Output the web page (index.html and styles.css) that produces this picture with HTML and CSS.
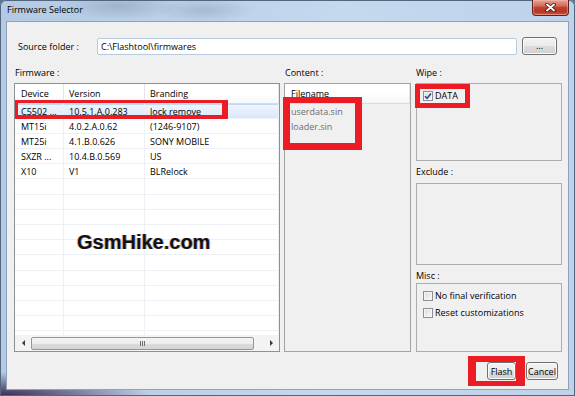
FILE: index.html
```html
<!DOCTYPE html>
<html lang="en">
<head>
    <meta charset="UTF-8">
    <title>Firmware Selector</title>
    <link rel="stylesheet" href="styles.css">
</head>
<body>
    <div class="window">
        <div class="titlebar">
            <span class="title">Firmware Selector</span>
            <div class="close-button">
                <svg width="11" height="9" viewBox="0 0 11 9">
                    <path d="M2 1.5 L9 7.5 M9 1.5 L2 7.5" stroke="#3a1410" stroke-width="3.6" stroke-linecap="round"/>
                    <path d="M2 1.5 L9 7.5 M9 1.5 L2 7.5" stroke="#fff" stroke-width="1.9" stroke-linecap="round"/>
                </svg>
            </div>
        </div>
        <div class="client">
            <div class="source-row">
                <span class="source-label">Source folder :</span>
                <div class="textbox">C:\Flashtool\firmwares</div>
                <button class="btn browse-button">...</button>
            </div>
            <div class="panels">
                <div class="col col-firmware">
                    <div class="group-label">Firmware :</div>
                    <div class="list-box firmware-list">
                        <div class="rows">
                            <div class="row head">
                                <div class="cell">Device</div>
                                <div class="cell">Version</div>
                                <div class="cell">Branding</div>
                            </div>
                            <div class="row selected">
                                <div class="cell">C5502 ...</div>
                                <div class="cell">10.5.1.A.0.283</div>
                                <div class="cell">lock remove</div>
                            </div>
                            <div class="row">
                                <div class="cell">MT15i</div>
                                <div class="cell">4.0.2.A.0.62</div>
                                <div class="cell">(1246-9107)</div>
                            </div>
                            <div class="row">
                                <div class="cell">MT25i</div>
                                <div class="cell">4.1.B.0.626</div>
                                <div class="cell">SONY MOBILE</div>
                            </div>
                            <div class="row">
                                <div class="cell">SXZR ...</div>
                                <div class="cell">10.4.B.0.569</div>
                                <div class="cell">US</div>
                            </div>
                            <div class="row">
                                <div class="cell">X10</div>
                                <div class="cell">V1</div>
                                <div class="cell">BLRelock</div>
                            </div>
                            <div class="row"><div class="cell"></div><div class="cell"></div><div class="cell"></div></div>
                            <div class="row"><div class="cell"></div><div class="cell"></div><div class="cell"></div></div>
                            <div class="row"><div class="cell"></div><div class="cell"></div><div class="cell"></div></div>
                            <div class="row"><div class="cell"></div><div class="cell"></div><div class="cell"></div></div>
                            <div class="row"><div class="cell"></div><div class="cell"></div><div class="cell"></div></div>
                            <div class="row"><div class="cell"></div><div class="cell"></div><div class="cell"></div></div>
                            <div class="row"><div class="cell"></div><div class="cell"></div><div class="cell"></div></div>
                            <div class="row"><div class="cell"></div><div class="cell"></div><div class="cell"></div></div>
                            <div class="row"><div class="cell"></div><div class="cell"></div><div class="cell"></div></div>
                            <div class="row"><div class="cell"></div><div class="cell"></div><div class="cell"></div></div>
                            <div class="row"><div class="cell"></div><div class="cell"></div><div class="cell"></div></div>
                        </div>
                        <div class="hscroll">
                            <div class="arrow arrow-left"></div>
                            <div class="thumb"><div class="grip"></div></div>
                            <div class="track"></div>
                            <div class="arrow arrow-right"></div>
                        </div>
                    </div>
                </div>
                <div class="col col-content">
                    <div class="group-label">Content :</div>
                    <div class="list-box content-list">
                        <div class="content-head">Filename</div>
                        <div class="content-item">userdata.sin</div>
                        <div class="content-item">loader.sin</div>
                    </div>
                </div>
                <div class="col col-options">
                    <div class="group-label">Wipe :</div>
                    <div class="group-box wipe-box">
                        <div class="check">
                            <span class="checkbox checked">
                                <svg width="8" height="8" viewBox="0 0 8 8">
                                    <path d="M1 4.2 L3.1 6.4 L7 1.4" fill="none" stroke="#2b4488" stroke-width="1.6"/>
                                </svg>
                            </span>
                            <span>DATA</span>
                        </div>
                    </div>
                    <div class="group-label exclude-label">Exclude :</div>
                    <div class="group-box exclude-box"></div>
                    <div class="group-label misc-label">Misc :</div>
                    <div class="group-box misc-box">
                        <div class="check">
                            <span class="checkbox"></span>
                            <span>No final verification</span>
                        </div>
                        <div class="check">
                            <span class="checkbox"></span>
                            <span>Reset customizations</span>
                        </div>
                    </div>
                </div>
            </div>
            <div class="actions">
                <button class="btn flash-button">Flash</button>
                <button class="btn cancel-button">Cancel</button>
            </div>
        </div>

        <div class="watermark">GsmHike.com</div>
        <div class="mark mark-row"></div>
        <div class="mark mark-content"></div>
        <div class="mark mark-wipe"></div>
        <div class="mark mark-flash"></div>
    </div>
</body>
</html>
```

FILE: styles.css
```css
* {
    box-sizing: border-box;
}
body {
    margin: 0;
    background-color: #5d7391;
    font-family: "Open Sans", "Noto Sans", sans-serif;
    font-size: 9px;
    color: #000;
    overflow: hidden;
}
.window {
    position: relative;
    width: 575px;
    height: 396px;
    display: flex;
    flex-direction: column;
    padding: 0 6px 6px;
    border-radius: 6px 6px 0 0;
    background:
        radial-gradient(ellipse 150px 24px at 0 100%, rgba(48, 30, 72, 0.95), rgba(48, 30, 72, 0)),
        radial-gradient(ellipse 60px 14px at 120px 6px, rgba(112, 130, 152, 0.35), rgba(112, 130, 152, 0)),
        radial-gradient(ellipse 50px 12px at 205px 10px, rgba(112, 130, 152, 0.3), rgba(112, 130, 152, 0)),
        linear-gradient(to right, #b4cae4, #c4d8ee 60%, #bed3ea);
    box-shadow: inset 0 0 0 1px #53667f;
}
.titlebar {
    display: flex;
    height: 21px;
    flex-shrink: 0;
}
.title {
    padding-left: 1px;
    line-height: 20px;
}
.close-button {
    margin-left: auto;
    width: 37px;
    height: 16px;
    display: flex;
    align-items: center;
    justify-content: center;
    border: 1px solid #5e241c;
    border-top: none;
    border-radius: 0 0 4px 4px;
    background: linear-gradient(#e6a496 0%, #d46a5a 40%, #c2402f 50%, #b83424 80%, #cf6650 100%);
    box-shadow: inset 0 0 0 1px rgba(255, 190, 180, 0.45);
}
.client {
    flex: 1;
    display: flex;
    flex-direction: column;
    background-color: #f0f0f0;
    border: 1px solid #8fa2ba;
}

/* source folder */
.source-row {
    display: flex;
    align-items: center;
    height: 18px;
    margin-top: 15px;
    padding-left: 11px;
}
.source-label {
    width: 79px;
}
.textbox {
    width: 420px;
    height: 17px;
    padding-left: 3px;
    line-height: 15px;
    background-color: #fff;
    border: 1px solid #b7cbe0;
    border-radius: 2px;
}
.btn {
    height: 18px;
    padding: 0;
    font-family: inherit;
    font-size: 9px;
    color: #000;
    border: 1px solid #707070;
    border-radius: 3px;
    background: linear-gradient(#f3f3f3 0%, #ebebeb 48%, #dddddd 52%, #cfcfcf 100%);
    box-shadow: inset 0 0 0 1px #fbfbfb;
}
.browse-button {
    width: 35px;
    margin-left: 5px;
    line-height: 10px;
}

/* panels */
.panels {
    display: flex;
    margin-top: 12px;
    padding-left: 7px;
}
.col {
    display: flex;
    flex-direction: column;
}
.col-firmware {
    width: 266px;
}
.col-content {
    width: 127px;
    margin-left: 4px;
}
.col-options {
    width: 146px;
    margin-left: 5px;
}
.group-label {
    height: 16px;
    padding-left: 1px;
    line-height: 12px;
}
.col-options .group-label {
    padding-left: 0;
}
.exclude-label {
    height: 22px;
    padding-top: 5px;
}
.misc-label {
    height: 18px;
    padding-top: 5px;
}
.list-box {
    height: 269px;
    border: 1px solid #8c9097;
    display: flex;
    flex-direction: column;
    overflow: hidden;
}

/* firmware table */
.firmware-list {
    background-color: #fff;
}
.rows {
    flex: 1;
    overflow: hidden;
}
.row {
    display: grid;
    grid-template-columns: 49px 81px 1fr;
    height: 15.2px;
    line-height: 15px;
}
.cell {
    padding-left: 5px;
    white-space: nowrap;
    overflow: hidden;
    border-right: 1px solid #edf1f6;
    border-bottom: 1px solid #edf1f6;
}
.cell:first-child {
    padding-left: 6px;
}
.row.head {
    height: 19.5px;
    line-height: 19px;
    background: linear-gradient(#ffffff 0%, #ffffff 50%, #f5f6f8 100%);
}
.row.head .cell {
    border-right-color: #e2e6ec;
    border-bottom-color: #d8dce2;
}
.row.selected {
    background: linear-gradient(#f0f6fe, #d7e7fa);
    box-shadow: inset 0 0 0 1px #c2d9f5;
}
.hscroll {
    display: flex;
    align-items: center;
    height: 16px;
    background-color: #f3f3f3;
}
.arrow {
    width: 16px;
    height: 16px;
    display: flex;
    align-items: center;
    justify-content: center;
}
.arrow::before {
    content: "";
    border-top: 3px solid transparent;
    border-bottom: 3px solid transparent;
}
.arrow-left::before {
    border-right: 3px solid #3a3a3a;
}
.arrow-right::before {
    border-left: 3px solid #3a3a3a;
}
.thumb {
    width: 223px;
    height: 13px;
    display: flex;
    align-items: center;
    justify-content: center;
    border: 1px solid #979797;
    border-radius: 2px;
    background: linear-gradient(#f4f4f4 0%, #ececec 50%, #dcdcdc 52%, #d4d4d4 100%);
}
.grip {
    width: 5px;
    height: 5px;
    background: repeating-linear-gradient(to right, #6f6f6f 0, #6f6f6f 1px, transparent 1px, transparent 2px);
}
.track {
    flex: 1;
}

/* content list */
.content-list {
    background-color: #f0f0f0;
    border-color: #a3a3a3;
}
.content-head {
    height: 19.5px;
    padding-left: 6px;
    line-height: 19px;
    background: linear-gradient(#ffffff 0%, #ffffff 50%, #f5f6f8 100%);
    border-right: 1px solid #e2e6ec;
    border-bottom: 1px solid #d8dce2;
}
.content-item {
    height: 15.2px;
    padding-left: 6px;
    line-height: 15px;
    color: #6d6d6d;
}

/* option groups */
.group-box {
    border: 1px solid #adadad;
    background-color: #f0f0f0;
}
.wipe-box {
    height: 78px;
    padding: 6px 0 0 6px;
}
.exclude-box {
    height: 82px;
}
.misc-box {
    height: 69px;
    padding: 6px 0 0 6px;
    display: flex;
    flex-direction: column;
    gap: 6px;
}
.check {
    display: flex;
    align-items: center;
    gap: 2px;
    height: 11px;
    line-height: 11px;
}
.checkbox {
    width: 10px;
    height: 10px;
    display: flex;
    align-items: center;
    justify-content: center;
    border: 1px solid #8e8f8f;
    background: linear-gradient(135deg, #d9d9d9, #fbfbfb);
    box-shadow: inset 0 0 0 1px #f6f6f6;
}

/* bottom buttons */
.actions {
    display: flex;
    justify-content: flex-end;
    gap: 10px;
    margin-top: 10px;
    padding-right: 10px;
}
.flash-button {
    width: 29px;
}
.cancel-button {
    width: 32px;
}

/* overlays */
.watermark {
    position: absolute;
    left: 77px;
    top: 232px;
    font-family: "Liberation Sans", Arial, sans-serif;
    font-weight: bold;
    font-size: 20px;
    line-height: 20px;
    color: #111;
    text-shadow: -1px 0 0 rgba(220, 120, 20, 0.45), 1px 0 0 rgba(30, 70, 210, 0.4);
}
.mark {
    position: absolute;
    border-style: solid;
    border-color: #ec1c24;
}
.mark-row {
    left: 15px;
    top: 100px;
    width: 213px;
    height: 19px;
    border-width: 3px 6px 4px 3px;
}
.mark-content {
    left: 283px;
    top: 97px;
    width: 79px;
    height: 53px;
    border-width: 6px 7px 7px 7px;
}
.mark-wipe {
    left: 415px;
    top: 84px;
    width: 55px;
    height: 24px;
    border-width: 5px;
}
.mark-flash {
    left: 468px;
    top: 356px;
    width: 57px;
    height: 30px;
    border-width: 6px 9px 5px 8px;
}
```
